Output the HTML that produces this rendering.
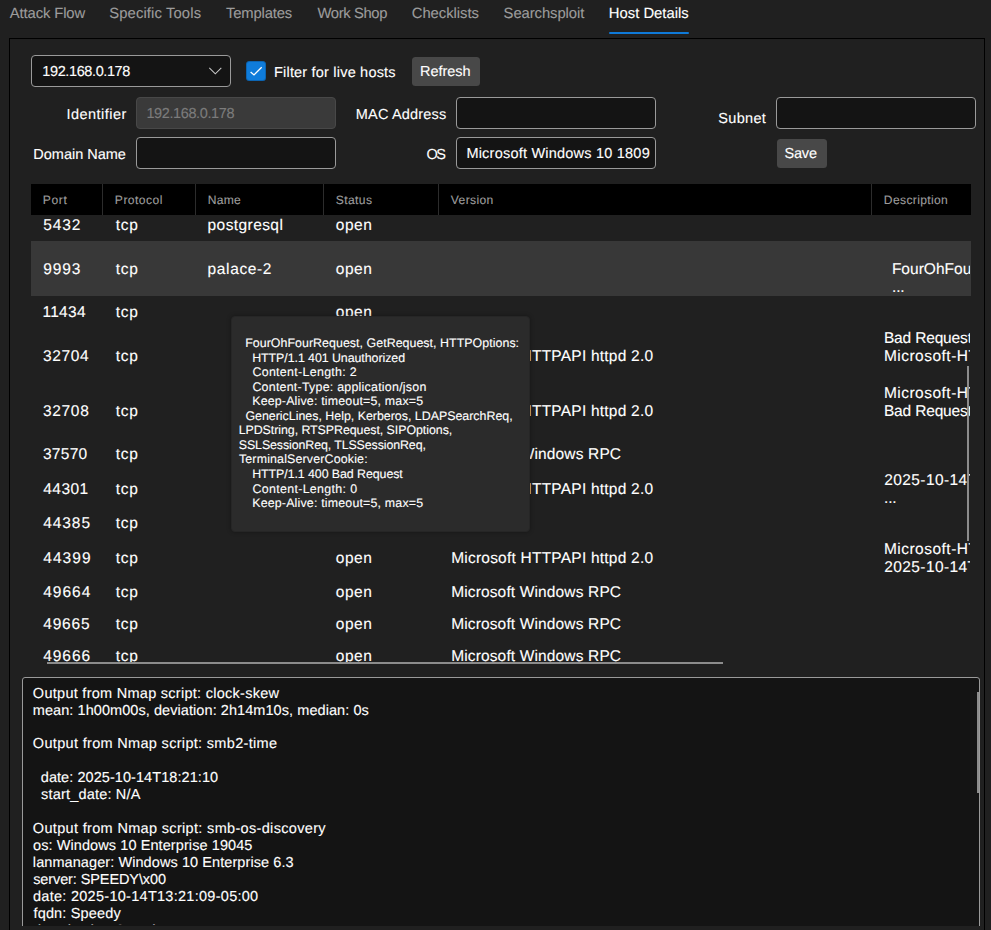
<!DOCTYPE html>
<html lang="en">
<head>
<meta charset="utf-8">
<title>Host Details</title>
<style>
*{box-sizing:border-box;margin:0;padding:0}
html,body{width:991px;height:930px;overflow:hidden;background:#202020}
body{font-family:"Liberation Sans",sans-serif;text-rendering:geometricPrecision;color:#fff;font-size:14px;position:relative}
.abs{position:absolute}
.x{position:absolute;white-space:pre;color:#fff;-webkit-text-stroke:0.12px currentColor}
.x.tab{font-size:14.8px;line-height:18px}
.x.b{font-size:14.5px;line-height:18px}
.x.h{font-size:12.1px;line-height:16px}
.x.c{font-size:15.5px;line-height:18px}
.x.t{font-size:12.4px;line-height:15px}
.x.o{font-size:14.5px;line-height:17px}

.x.tab{color:#9c9c9c}
.x.tab.sel{color:#fff}
.x.dis{color:#7c7c7c}
.x.h{color:#9c9c9c}
#underline{position:absolute;left:609px;top:32px;width:80px;height:2px;background:#0f7ad8;border-radius:1px}
#frame{position:absolute;left:9px;top:38px;width:976px;height:900px;border:1px solid #000}
.inp{position:absolute;height:32px;width:200px;border:1px solid #9a9a9a;border-radius:4px;background:#141414}
.inp.dis{background:#3a3a3a;border-color:#484848}
.btn{position:absolute;height:29px;background:#484848;border-radius:3.5px}
#chk{position:absolute;left:246px;top:61px;width:20px;height:20px;background:#0f7cdb;border-radius:3.5px;box-shadow:inset 0 0 0 1px rgba(0,0,0,.18)}
#thead{position:absolute;left:31px;top:184px;width:940px;height:31px;background:#000}
.sep{position:absolute;top:184px;width:1px;height:31px;background:#2c2c2c}
#rowsel{position:absolute;left:31px;top:241px;width:940px;height:55px;background:#383838}
#desc{position:absolute;left:0;top:215px;width:970px;height:450px;overflow:hidden}
#desc .x{margin-top:-215px}
#cells{position:absolute;left:0;top:215px;width:971px;height:447px;overflow:hidden}
#cells .x{margin-top:-215px}
#hsb{position:absolute;left:47px;top:662px;width:676px;height:2px;background:#8c8c8c}
#vsb{position:absolute;left:967px;top:366px;width:2px;height:175px;background:#8c8c8c}
#tip{position:absolute;left:231px;top:316px;width:299px;height:216px;background:#2b2b2b;border:1px solid #262626;border-radius:4px;box-shadow:0 0 4px rgba(0,0,0,.35)}
#out{position:absolute;left:22px;top:677px;width:958px;height:261px;border:1px solid #9a9a9a;border-radius:3px;background:#141414}
#outclip{position:absolute;left:0;top:0;width:991px;height:925px;overflow:hidden}
#osb{position:absolute;left:977px;top:692px;width:2px;height:101px;background:#8c8c8c}
#botmask{position:absolute;left:10px;top:926px;width:974px;height:4px;background:#202020}
</style>
</head>
<body>
<div id="frame"></div>

<div class="x tab" style="left:9.75px;top:5px;letter-spacing:-0.106px">Attack Flow</div>
<div class="x tab" style="left:109.24px;top:5px;letter-spacing:0.123px">Specific Tools</div>
<div class="x tab" style="left:226.03px;top:5px;letter-spacing:-0.154px">Templates</div>
<div class="x tab" style="left:317.45px;top:5px;letter-spacing:-0.367px">Work Shop</div>
<div class="x tab" style="left:411.75px;top:5px;letter-spacing:-0.032px">Checklists</div>
<div class="x tab" style="left:503.59px;top:5px;letter-spacing:-0.066px">Searchsploit</div>
<div class="x tab sel" style="left:608.80px;top:5px;letter-spacing:0.017px">Host Details</div>
<div id="underline"></div>

<div class="inp" style="left:31px;top:55px"></div>
<svg class="abs" style="left:206px;top:64px" width="18" height="14" viewBox="0 0 18 14"><path d="M3.3 3.8 L9.3 9.8 L15.3 3.8" fill="none" stroke="#c8c8c8" stroke-width="1.05"/></svg>
<div id="chk"><svg width="20" height="20" viewBox="0 0 20 20"><path d="M4.6 11 L8 13.9 L15.7 6.3" fill="none" stroke="#fff" stroke-width="1.3"/></svg></div>
<div class="btn" style="left:411.5px;top:56.5px;width:68px"></div>
<div class="inp dis" style="left:136px;top:97px"></div>
<div class="inp" style="left:456px;top:97px"></div>
<div class="inp" style="left:776px;top:97px"></div>
<div class="inp" style="left:136px;top:137px"></div>
<div class="inp" style="left:456px;top:137px"></div>
<div class="btn" style="left:776.6px;top:138.5px;width:50px"></div>
<div class="x b" style="left:42.36px;top:63px;letter-spacing:-0.395px">192.168.0.178</div>
<div class="x b" style="left:274.01px;top:64px;letter-spacing:0.196px">Filter for live hosts</div>
<div class="x b" style="left:420.01px;top:63px;letter-spacing:-0.038px">Refresh</div>
<div class="x b" style="left:66.46px;top:106px;letter-spacing:0.464px">Identifier</div>
<div class="x b dis" style="left:146.46px;top:105px;letter-spacing:-0.395px">192.168.0.178</div>
<div class="x b" style="left:355.80px;top:106px;letter-spacing:0.173px">MAC Address</div>
<div class="x b" style="left:718.36px;top:110px;letter-spacing:0.290px">Subnet</div>
<div class="x b" style="left:33.34px;top:146px;letter-spacing:-0.008px">Domain Name</div>
<div class="x b" style="left:426.55px;top:146px;letter-spacing:-1.613px">OS</div>
<div class="x b" style="left:466.40px;top:145px;letter-spacing:0.217px">Microsoft Windows 10 1809</div>
<div class="x b" style="left:784.54px;top:145px;letter-spacing:-0.206px">Save</div>

<div id="thead"></div>
<div class="sep" style="left:102px"></div>
<div class="sep" style="left:195px"></div>
<div class="sep" style="left:323px"></div>
<div class="sep" style="left:438px"></div>
<div class="sep" style="left:871px"></div>
<div class="x h" style="left:42.72px;top:192px;letter-spacing:0.616px">Port</div>
<div class="x h" style="left:114.86px;top:192px;letter-spacing:0.451px">Protocol</div>
<div class="x h" style="left:207.73px;top:192px;letter-spacing:0.260px">Name</div>
<div class="x h" style="left:335.76px;top:192px;letter-spacing:0.383px">Status</div>
<div class="x h" style="left:450.84px;top:192px;letter-spacing:0.356px">Version</div>
<div class="x h" style="left:883.86px;top:192px;letter-spacing:0.344px">Description</div>

<div id="rowsel"></div>
<div id="cells">
<div class="x c" style="left:43.18px;top:217px;letter-spacing:0.879px">5432</div>
<div class="x c" style="left:115.70px;top:217px;letter-spacing:0.749px">tcp</div>
<div class="x c" style="left:335.72px;top:217px;letter-spacing:0.561px">open</div>
<div class="x c" style="left:43.15px;top:261px;letter-spacing:0.902px">9993</div>
<div class="x c" style="left:115.70px;top:261px;letter-spacing:0.749px">tcp</div>
<div class="x c" style="left:335.72px;top:261px;letter-spacing:0.561px">open</div>
<div class="x c" style="left:42.40px;top:304px;letter-spacing:0.305px">11434</div>
<div class="x c" style="left:115.70px;top:304px;letter-spacing:0.749px">tcp</div>
<div class="x c" style="left:335.72px;top:304px;letter-spacing:0.561px">open</div>
<div class="x c" style="left:42.96px;top:348px;letter-spacing:0.628px">32704</div>
<div class="x c" style="left:115.70px;top:348px;letter-spacing:0.749px">tcp</div>
<div class="x c" style="left:335.72px;top:348px;letter-spacing:0.561px">open</div>
<div class="x c" style="left:42.96px;top:403px;letter-spacing:0.678px">32708</div>
<div class="x c" style="left:115.70px;top:403px;letter-spacing:0.749px">tcp</div>
<div class="x c" style="left:335.72px;top:403px;letter-spacing:0.561px">open</div>
<div class="x c" style="left:42.96px;top:446px;letter-spacing:0.295px">37570</div>
<div class="x c" style="left:115.70px;top:446px;letter-spacing:0.749px">tcp</div>
<div class="x c" style="left:335.72px;top:446px;letter-spacing:0.561px">open</div>
<div class="x c" style="left:43.21px;top:481px;letter-spacing:0.477px">44301</div>
<div class="x c" style="left:115.70px;top:481px;letter-spacing:0.749px">tcp</div>
<div class="x c" style="left:335.72px;top:481px;letter-spacing:0.561px">open</div>
<div class="x c" style="left:43.21px;top:515px;letter-spacing:0.928px">44385</div>
<div class="x c" style="left:115.70px;top:515px;letter-spacing:0.749px">tcp</div>
<div class="x c" style="left:335.72px;top:515px;letter-spacing:0.561px">open</div>
<div class="x c" style="left:43.21px;top:550px;letter-spacing:1.067px">44399</div>
<div class="x c" style="left:115.70px;top:550px;letter-spacing:0.749px">tcp</div>
<div class="x c" style="left:335.72px;top:550px;letter-spacing:0.561px">open</div>
<div class="x c" style="left:43.21px;top:584px;letter-spacing:0.995px">49664</div>
<div class="x c" style="left:115.70px;top:584px;letter-spacing:0.749px">tcp</div>
<div class="x c" style="left:335.72px;top:584px;letter-spacing:0.561px">open</div>
<div class="x c" style="left:43.21px;top:616px;letter-spacing:0.828px">49665</div>
<div class="x c" style="left:115.70px;top:616px;letter-spacing:0.749px">tcp</div>
<div class="x c" style="left:335.72px;top:616px;letter-spacing:0.561px">open</div>
<div class="x c" style="left:43.21px;top:648px;letter-spacing:0.939px">49666</div>
<div class="x c" style="left:115.70px;top:648px;letter-spacing:0.749px">tcp</div>
<div class="x c" style="left:335.72px;top:648px;letter-spacing:0.561px">open</div>
<div class="x c" style="left:207.57px;top:217px;letter-spacing:0.416px">postgresql</div>
<div class="x c" style="left:207.57px;top:261px;letter-spacing:0.638px">palace-2</div>
<div class="x c" style="left:451.13px;top:348px;letter-spacing:0.225px">Microsoft HTTPAPI httpd 2.0</div>
<div class="x c" style="left:451.13px;top:403px;letter-spacing:0.225px">Microsoft HTTPAPI httpd 2.0</div>
<div class="x c" style="left:451.13px;top:481px;letter-spacing:0.225px">Microsoft HTTPAPI httpd 2.0</div>
<div class="x c" style="left:451.13px;top:550px;letter-spacing:0.225px">Microsoft HTTPAPI httpd 2.0</div>
<div class="x c" style="left:451.13px;top:446px;letter-spacing:0.142px">Microsoft Windows RPC</div>
<div class="x c" style="left:451.13px;top:584px;letter-spacing:0.142px">Microsoft Windows RPC</div>
<div class="x c" style="left:451.13px;top:616px;letter-spacing:0.142px">Microsoft Windows RPC</div>
<div class="x c" style="left:451.13px;top:648px;letter-spacing:0.142px">Microsoft Windows RPC</div>
</div>
<div id="desc">
<div class="x c d" style="left:891.90px;top:261px;letter-spacing:0.014px">FourOhFourRequest, GetRequest, HTTPOptions:</div>
<div class="x c d" style="left:892.09px;top:279px;letter-spacing:-0.209px">...</div>
<div class="x c d" style="left:883.90px;top:330px;letter-spacing:-0.157px">Bad Request</div>
<div class="x c d" style="left:883.90px;top:348px;letter-spacing:0.490px">Microsoft-HTTPAPI/2.0</div>
<div class="x c d" style="left:883.90px;top:385px;letter-spacing:0.490px">Microsoft-HTTPAPI/2.0</div>
<div class="x c d" style="left:883.90px;top:403px;letter-spacing:-0.157px">Bad Request</div>
<div class="x c d" style="left:884.32px;top:472px;letter-spacing:0.390px">2025-10-14T18:21:10</div>
<div class="x c d" style="left:884.09px;top:490px;letter-spacing:-0.209px">...</div>
<div class="x c d" style="left:883.90px;top:541px;letter-spacing:0.490px">Microsoft-HTTPAPI/2.0</div>
<div class="x c d" style="left:884.32px;top:559px;letter-spacing:0.390px">2025-10-14T18:21:10</div>
</div>

<div id="hsb"></div>
<div id="vsb"></div>

<div id="out"></div>
<div id="outclip">
<div class="x o" style="left:32.86px;top:686px;letter-spacing:0.274px">Output from Nmap script: clock-skew</div>
<div class="x o" style="left:32.82px;top:703px;letter-spacing:0.067px">mean: 1h00m00s, deviation: 2h14m10s, median: 0s</div>
<div class="x o" style="left:32.86px;top:736px;letter-spacing:0.318px">Output from Nmap script: smb2-time</div>
<div class="x o" style="left:40.75px;top:770px;letter-spacing:0.066px">date: 2025-10-14T18:21:10</div>
<div class="x o" style="left:41.08px;top:787px;letter-spacing:0.185px">start_date: N/A</div>
<div class="x o" style="left:32.86px;top:821px;letter-spacing:0.328px">Output from Nmap script: smb-os-discovery</div>
<div class="x o" style="left:33.03px;top:838px;letter-spacing:0.086px">os: Windows 10 Enterprise 19045</div>
<div class="x o" style="left:32.85px;top:855px;letter-spacing:0.078px">lanmanager: Windows 10 Enterprise 6.3</div>
<div class="x o" style="left:33.15px;top:872px;letter-spacing:-0.098px">server: SPEEDY\x00</div>
<div class="x o" style="left:32.99px;top:889px;letter-spacing:0.278px">date: 2025-10-14T13:21:09-05:00</div>
<div class="x o" style="left:33.51px;top:906px;letter-spacing:0.155px">fqdn: Speedy</div>
<div class="x o" style="left:32.99px;top:923px;letter-spacing:-0.394px">domain_dns: Speedy</div>
</div>
<div id="osb"></div>
<div id="botmask"></div>

<div id="tip"></div>
<div class="x t" style="left:245.16px;top:336px;letter-spacing:0.045px">FourOhFourRequest, GetRequest, HTTPOptions:</div>
<div class="x t" style="left:252.20px;top:351px;letter-spacing:-0.060px">HTTP/1.1 401 Unauthorized</div>
<div class="x t" style="left:252.41px;top:365px;letter-spacing:0.322px">Content-Length: 2</div>
<div class="x t" style="left:252.41px;top:380px;letter-spacing:0.249px">Content-Type: application/json</div>
<div class="x t" style="left:252.19px;top:394px;letter-spacing:0.184px">Keep-Alive: timeout=5, max=5</div>
<div class="x t" style="left:245.42px;top:409px">GenericLines, Help, Kerberos, LDAPSearchReq,</div>
<div class="x t" style="left:238.64px;top:423px;letter-spacing:-0.051px">LPDString, RTSPRequest, SIPOptions,</div>
<div class="x t" style="left:238.79px;top:438px;letter-spacing:-0.099px">SSLSessionReq, TLSSessionReq,</div>
<div class="x t" style="left:238.94px;top:452px;letter-spacing:0.166px">TerminalServerCookie:</div>
<div class="x t" style="left:252.20px;top:467px;letter-spacing:-0.070px">HTTP/1.1 400 Bad Request</div>
<div class="x t" style="left:252.41px;top:482px;letter-spacing:0.339px">Content-Length: 0</div>
<div class="x t" style="left:252.19px;top:496px;letter-spacing:0.184px">Keep-Alive: timeout=5, max=5</div>
</body>
</html>
